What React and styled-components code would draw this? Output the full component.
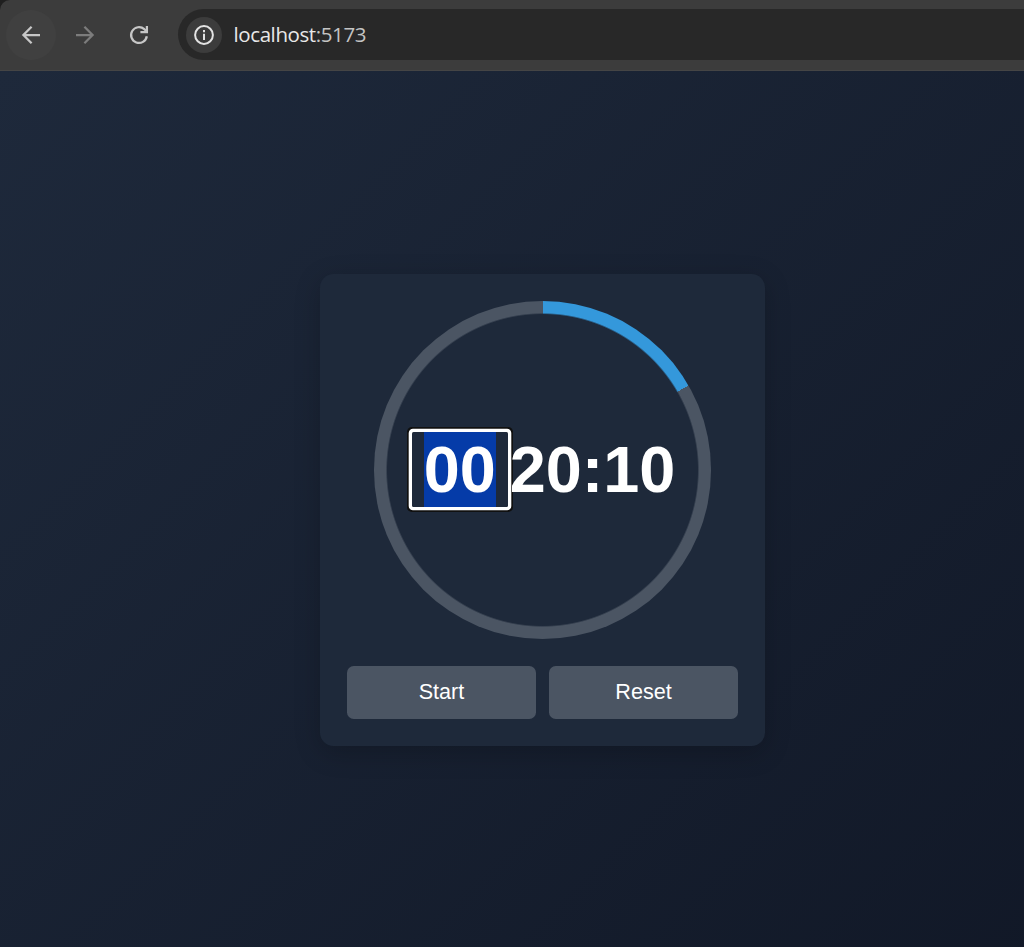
import React from 'react';
import styled, { createGlobalStyle } from 'styled-components';

const GlobalStyle = createGlobalStyle`
  *, *::before, *::after { box-sizing: border-box; }
  html, body { margin: 0; padding: 0; background: #1f1f1f; overflow: hidden; }
`;

const Window = styled.div`
  display: flex;
  flex-direction: column;
  width: 100vw;
  height: 100vh;
  overflow: hidden;
`;

const Toolbar = styled.header`
  display: flex;
  align-items: center;
  flex: 0 0 71px;
  padding: 0 0 1px 6px;
  background: #3c3c3c;
  border-bottom: 1px solid #454545;
  border-top-left-radius: 10px;
`;

const NavButton = styled.button`
  display: flex;
  align-items: center;
  justify-content: center;
  width: 50px;
  height: 50px;
  margin-right: 4px;
  padding: 0;
  border: 0;
  border-radius: 50%;
  background: ${({ $active }) => ($active ? '#404040' : 'transparent')};
  color: ${({ $dim }) => ($dim ? '#7c7c7c' : '#c7c7c7')};
`;

const AddressBar = styled.div`
  display: flex;
  align-items: center;
  flex: 1;
  height: 51px;
  margin-left: 10px;
  padding-left: 8px;
  border-radius: 26px 0 0 26px;
  background: #282828;
`;

const SiteInfo = styled.span`
  display: flex;
  align-items: center;
  justify-content: center;
  width: 36px;
  height: 36px;
  border-radius: 50%;
  background: #3c3c3c;
  color: #e3e3e3;
`;

const Url = styled.span`
  margin-left: 11.5px;
  padding-bottom: 2px;
  font: 20.5px/28px 'Open Sans', 'Noto Sans', sans-serif;
  letter-spacing: -0.4px;
  color: #e8e8e8;
`;

const Port = styled.span`
  color: #c4c4c4;
`;

const Page = styled.main`
  display: flex;
  align-items: center;
  justify-content: center;
  flex: 0 0 878px;
  width: 1085px;
  background: linear-gradient(135deg, #1e293b, #111827);
  font-family: Arial, 'Liberation Sans', sans-serif;
`;

const Card = styled.section`
  display: flex;
  flex-direction: column;
  gap: 27px;
  width: 445px;
  height: 472px;
  padding: 27px;
  border-radius: 13.5px;
  background: #1e293a;
  box-shadow: 0 6.75px 27px rgba(0, 0, 0, 0.2);
`;

const Dial = styled.div`
  display: flex;
  align-items: center;
  justify-content: center;
  flex: 0 0 337.5px;
  align-self: center;
  width: 337.5px;
  border-radius: 50%;
  background:
    radial-gradient(closest-side, #1e293a 92%, transparent 93%),
    conic-gradient(at 50.2% 50%, #3498db 59.8deg, #4b5563 0);
`;

const Time = styled.div`
  display: flex;
  align-items: center;
  padding-left: 2px;
  color: #fff;
  font-size: 64.8px;
  font-weight: 700;
  line-height: 75px;
`;

const HoursField = styled.div`
  display: flex;
  width: 96px;
  height: 75px;
  padding-left: 12px;
  border-radius: 1.5px;
  box-shadow: 0 0 0 3.3px #fff, 0 0 0 5px #101010;
`;

const Selection = styled.span`
  width: 72px;
  background: #053ba8;
`;

const Remaining = styled.span`
  position: relative;
  margin-left: 2px;
`;

const Actions = styled.div`
  display: flex;
  gap: 13px;
`;

const ActionButton = styled.button`
  flex: 1;
  height: 53px;
  padding: 0 0 1px;
  border: 0;
  border-radius: 6.75px;
  background: #4b5563;
  color: #fff;
  font: 21.6px Arial, 'Liberation Sans', sans-serif;
`;

const BackIcon = () => (
  <svg width="20" height="20" viewBox="0 0 20 20" fill="none" stroke="currentColor" strokeWidth="2.25">
    <path d="M19 10H2.5M10.6 1.8 2.4 10l8.2 8.2" />
  </svg>
);

const ForwardIcon = () => (
  <svg width="20" height="20" viewBox="0 0 20 20" fill="none" stroke="currentColor" strokeWidth="2.25">
    <path d="M1 10h16.5M9.4 1.8l8.2 8.2-8.2 8.2" />
  </svg>
);

const ReloadIcon = () => (
  <svg width="20" height="20" viewBox="0 0 20 20" fill="none" stroke="currentColor" strokeWidth="2.25">
    <path d="M17.8 11.3A7.9 7.9 0 1 1 15.3 4.2L18 6.8M17.9 1v7.1M19 7.2h-7.6" />
  </svg>
);

const InfoIcon = () => (
  <svg width="20" height="20" viewBox="0 0 20 20" fill="none" stroke="currentColor" strokeWidth="2">
    <circle cx="10" cy="10" r="8.9" />
    <path d="M10 8.8v6.2M10 5v2.2" />
  </svg>
);

export default function App() {
  return (
    <Window>
      <GlobalStyle />
      <Toolbar>
        <NavButton $active aria-label="Back"><BackIcon /></NavButton>
        <NavButton $dim aria-label="Forward"><ForwardIcon /></NavButton>
        <NavButton aria-label="Reload"><ReloadIcon /></NavButton>
        <AddressBar>
          <SiteInfo><InfoIcon /></SiteInfo>
          <Url>localhost<Port>:5173</Port></Url>
        </AddressBar>
      </Toolbar>
      <Page>
        <Card>
          <Dial>
            <Time>
              <HoursField><Selection>00</Selection></HoursField>
              <Remaining>20:10</Remaining>
            </Time>
          </Dial>
          <Actions>
            <ActionButton>Start</ActionButton>
            <ActionButton>Reset</ActionButton>
          </Actions>
        </Card>
      </Page>
    </Window>
  );
}
